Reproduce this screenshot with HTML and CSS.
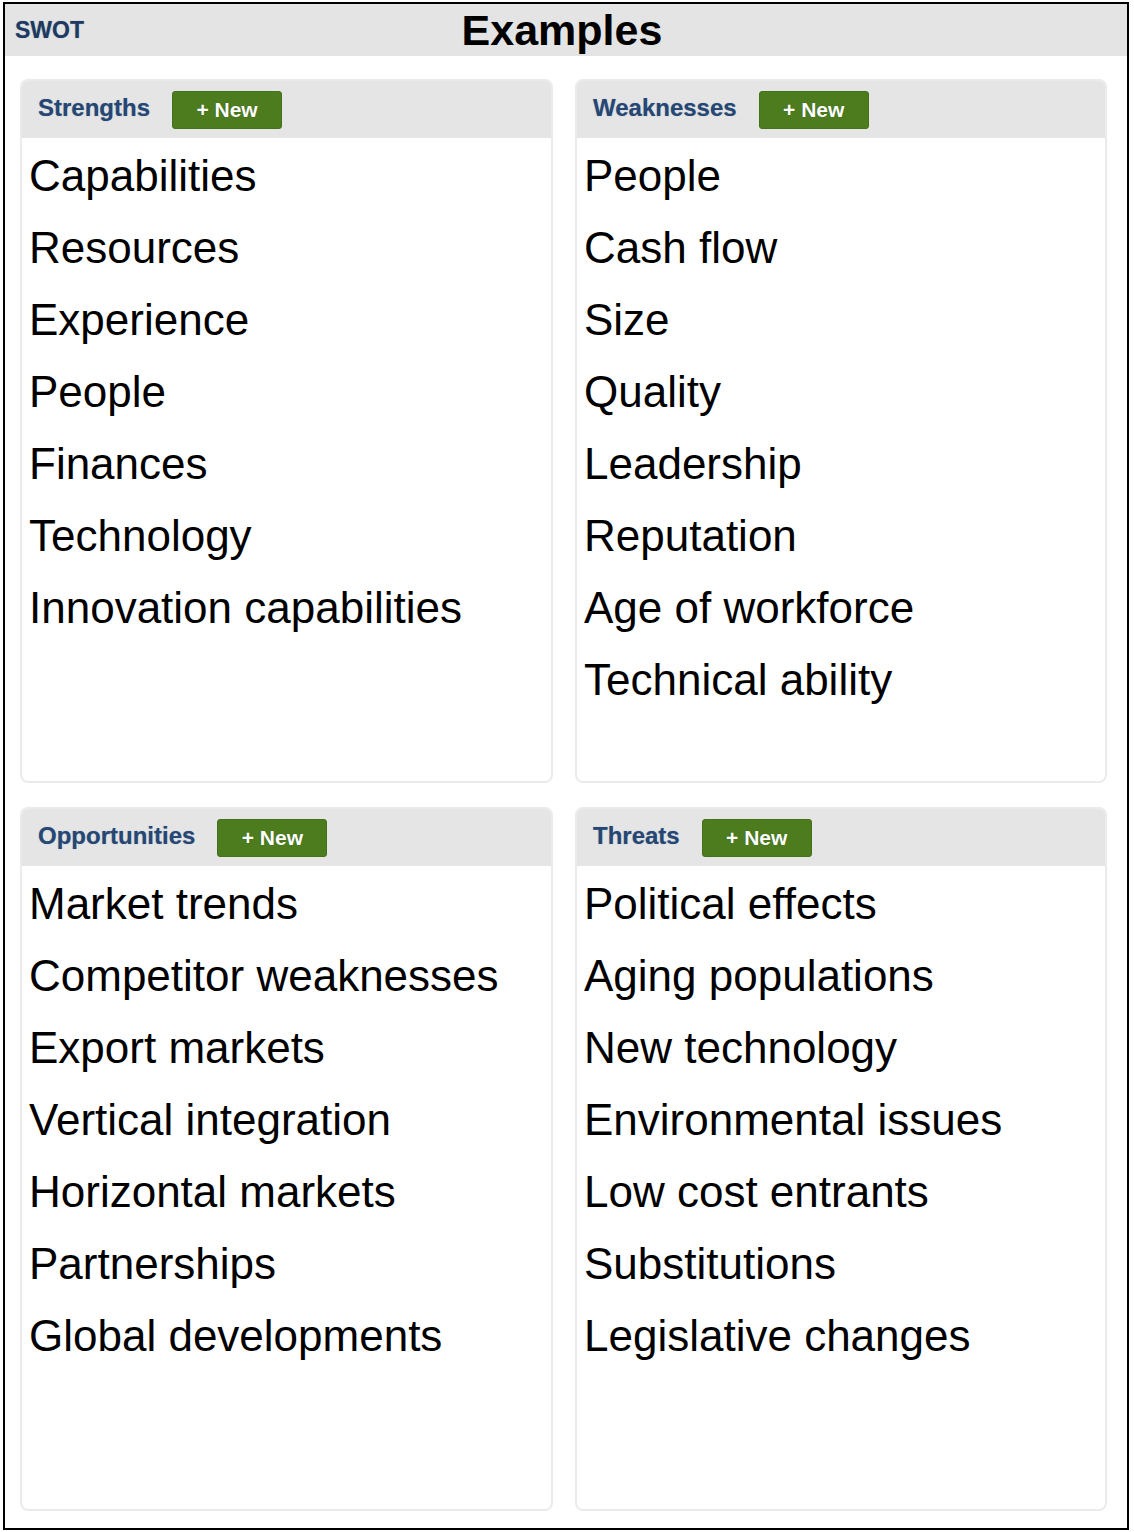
FILE: index.html
```html
<!DOCTYPE html>
<html lang="en">
<head>
<meta charset="utf-8">
<title>SWOT Examples</title>
<link rel="stylesheet" href="styles.css">
</head>
<body>
<div class="frame">
  <header class="topbar">
    <div class="brand">SWOT</div>
    <h1 class="title">Examples</h1>
    <div class="spacer"></div>
  </header>
  <main class="grid">
    <section class="panel">
      <div class="panel-head"><span class="label">Strengths</span><button class="new-btn">+ New</button></div>
      <ul class="items">
        <li>Capabilities</li>
        <li>Resources</li>
        <li>Experience</li>
        <li>People</li>
        <li>Finances</li>
        <li>Technology</li>
        <li>Innovation capabilities</li>
      </ul>
    </section>
    <section class="panel">
      <div class="panel-head"><span class="label">Weaknesses</span><button class="new-btn">+ New</button></div>
      <ul class="items">
        <li>People</li>
        <li>Cash flow</li>
        <li>Size</li>
        <li>Quality</li>
        <li>Leadership</li>
        <li>Reputation</li>
        <li>Age of workforce</li>
        <li>Technical ability</li>
      </ul>
    </section>
    <section class="panel">
      <div class="panel-head"><span class="label">Opportunities</span><button class="new-btn">+ New</button></div>
      <ul class="items">
        <li>Market trends</li>
        <li>Competitor weaknesses</li>
        <li>Export markets</li>
        <li>Vertical integration</li>
        <li>Horizontal markets</li>
        <li>Partnerships</li>
        <li>Global developments</li>
      </ul>
    </section>
    <section class="panel">
      <div class="panel-head"><span class="label">Threats</span><button class="new-btn">+ New</button></div>
      <ul class="items">
        <li>Political effects</li>
        <li>Aging populations</li>
        <li>New technology</li>
        <li>Environmental issues</li>
        <li>Low cost entrants</li>
        <li>Substitutions</li>
        <li>Legislative changes</li>
      </ul>
    </section>
  </main>
</div>
</body>
</html>
```
FILE: styles.css
```css
* { box-sizing: border-box; }
html, body { margin: 0; padding: 0; background: #fff; }
body { font-family: "Liberation Sans", Arial, Helvetica, sans-serif; color: #000; }

.frame {
  margin: 2px 5px 0 3px;
  width: 1126px;
  height: 1528px;
  border: 2px solid #000;
  display: flex;
  flex-direction: column;
}

.topbar {
  height: 52px;
  background: #e4e4e4;
  display: grid;
  grid-template-columns: 1fr auto 1fr;
  align-items: center;
  padding: 0 10px;
}
.brand {
  font-size: 23px;
  font-weight: bold;
  color: #1e3a62;
  line-height: 52px;
  text-shadow: 0 0 1px rgba(30, 58, 98, 0.5);
}
.title {
  margin: 0;
  font-size: 43px;
  font-weight: bold;
  line-height: 52px;
  color: #000;
  position: relative;
  left: -4px;
}

.grid {
  flex: 1;
  display: grid;
  grid-template-columns: 533px 532px;
  grid-template-rows: 704px 704px;
  column-gap: 22px;
  row-gap: 24px;
  padding: 23px 20px 16px 15px;
}

.panel {
  border: 2px solid #ebebeb;
  border-radius: 8px;
  overflow: hidden;
  background: #fff;
}
.panel-head {
  height: 57px;
  background: #e5e5e5;
  display: flex;
  align-items: center;
  padding: 0 0 0 16px;
  gap: 22px;
}
.label {
  font-size: 24px;
  font-weight: bold;
  color: #264673;
  padding-bottom: 3px;
  text-shadow: 0 0 1px rgba(38, 70, 115, 0.45);
}
.new-btn {
  width: 110px;
  height: 38px;
  border: 1px solid #45711b;
  border-radius: 3px;
  background: #4d7c1f;
  color: #fff;
  font-family: "Liberation Sans", Arial, sans-serif;
  font-size: 21px;
  font-weight: bold;
  padding: 0;
  text-shadow: 0 0 1px rgba(0, 0, 0, 0.35);
  margin-top: 1px;
}

.items {
  list-style: none;
  margin: 0;
  padding: 2px 0 0 0;
}
.items li {
  font-size: 44px;
  line-height: 72px;
  height: 72px;
  padding-left: 7px;
  white-space: nowrap;
}
```
